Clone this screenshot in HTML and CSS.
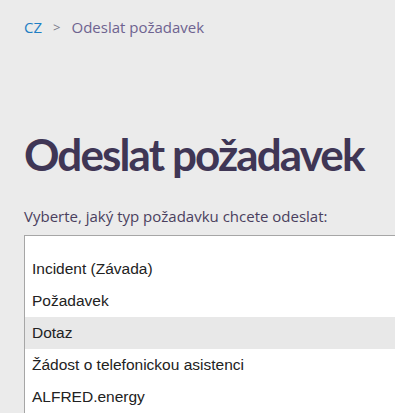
FILE: index.html
```html
<!DOCTYPE html>
<html lang="cs">
<head>
  <meta charset="UTF-8">
  <meta name="viewport" content="width=device-width, initial-scale=1.0">
  <title>Odeslat požadavek</title>
  <link rel="stylesheet" href="styles.css">
</head>
<body>
  <div class="page">
    <nav class="breadcrumb">
      <a href="#" class="crumb-home">CZ</a>
      <span class="crumb-sep">&gt;</span>
      <span class="crumb-current">Odeslat požadavek</span>
    </nav>
    <h1 class="title">Odeslat požadavek</h1>
    <label class="field-label">Vyberte, jaký typ požadavku chcete odeslat:</label>
    <div class="type-list">
      <div class="type-option empty"></div>
      <div class="type-option">Incident (Závada)</div>
      <div class="type-option">Požadavek</div>
      <div class="type-option hover">Dotaz</div>
      <div class="type-option">Žádost o telefonickou asistenci</div>
      <div class="type-option">ALFRED.energy</div>
    </div>
  </div>
</body>
</html>
```

FILE: styles.css
```css
body {
  margin: 0;
  padding: 0;
  background-color: #ebebeb;
  font-family: "Open Sans", Arial, sans-serif;
  overflow: hidden;
}
.page {
  padding: 16px 0 0 24px;
}
.breadcrumb {
  display: flex;
  align-items: center;
  gap: 11px;
  font-size: 15px;
  line-height: 22px;
}
.crumb-home {
  color: #1f7fc4;
  text-decoration: none;
}
.crumb-sep {
  color: #7a7a8a;
  font-size: 13px;
}
.crumb-current {
  color: #6e6390;
}
.title {
  margin: 91px 0 0;
  font-family: Lato, "Open Sans", sans-serif;
  font-size: 44px;
  line-height: 50px;
  font-weight: 700;
  letter-spacing: -1.9px;
  color: #3f3655;
  white-space: nowrap;
}
.field-label {
  display: block;
  margin-top: 27px;
  font-size: 15px;
  color: #4a3f5e;
}
.type-list {
  margin-top: 9px;
  width: 420px;
  background: #fff;
  border: 1px solid #a6a6a6;
  font-family: "Liberation Sans", Arial, sans-serif;
  font-size: 15.5px;
  color: #222;
}
.type-option {
  height: 32px;
  line-height: 32px;
  padding-left: 7px;
}
.type-option.empty {
  height: 17px;
}
.type-option.hover {
  background: #e8e8e8;
}
```
